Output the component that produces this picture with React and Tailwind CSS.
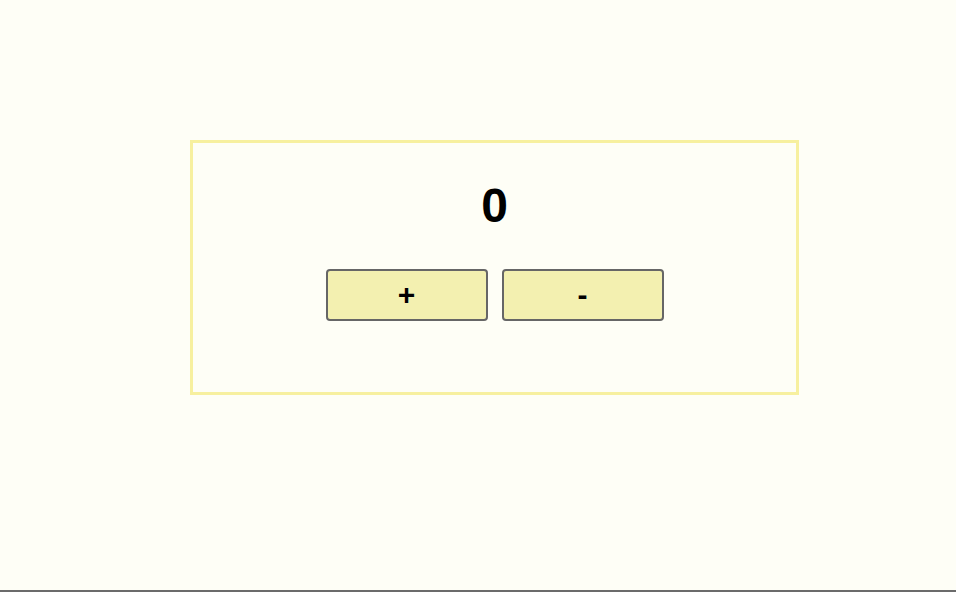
export default function App() {
  return (
    <div
      className="min-h-screen bg-[#fefef6] border-b-2 border-[#6b6b6b] pl-[190px] pt-[140px]"
      style={{ fontFamily: '"Liberation Sans", Arial, sans-serif' }}
    >
      <div className="w-[609px] h-[255px] border-[3px] border-[#f7f09f] flex flex-col items-center">
        <div className="mt-[35px] h-[56px] text-[48px] leading-[56px] font-bold text-black">0</div>
        <div className="mt-[35px] flex gap-[14px]">
          <button className="w-[162px] h-[52px] bg-[#f3f0b0] border-2 border-[#666666] rounded-[4px] text-[30px] font-bold leading-none text-black">
            +
          </button>
          <button className="w-[162px] h-[52px] bg-[#f3f0b0] border-2 border-[#666666] rounded-[4px] text-[30px] font-bold leading-none text-black">
            -
          </button>
        </div>
      </div>
    </div>
  );
}
